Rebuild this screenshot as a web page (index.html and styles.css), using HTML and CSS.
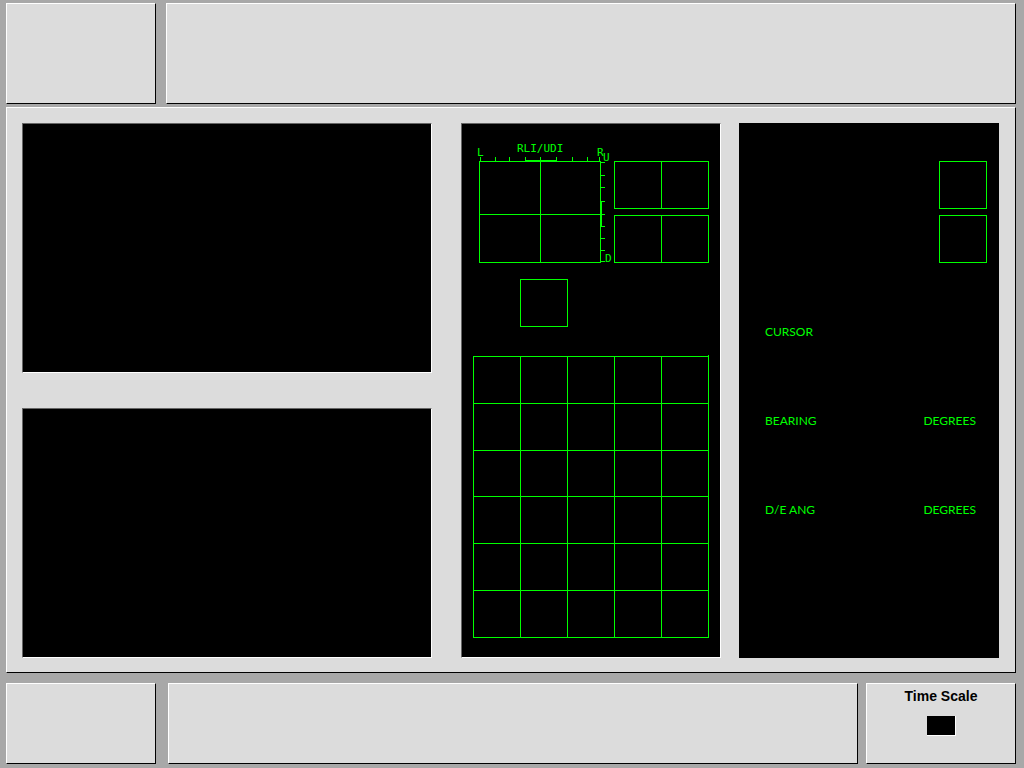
FILE: index.html
```
<!DOCTYPE html>
<html lang="en">
<head>
<meta charset="utf-8">
<title>Display Console</title>
<link rel="stylesheet" href="styles.css">
</head>
<body>
<div class="console">
  <header class="bar bar-top">
    <div class="panel panel-side"></div>
    <div class="panel panel-wide"></div>
  </header>

  <main class="panel workspace">
    <div class="displays">
      <section class="screen"></section>
      <section class="screen"></section>
    </div>

    <section class="screen indicators">
      <div class="gauges">
        <svg class="rli" width="139" height="120" viewBox="473 143 139 120" role="img" aria-label="RLI/UDI indicator">
          <g class="rli-line">
            <path d="M479 161h122v1h-122zM479 262h122v1h-122zM479 161h1v102h-1zM600 161h1v102h-1z"/>
            <path d="M540 157h1v106h-1zM479 214h126v1h-126z"/>
            <path d="M480 157h1v4h-1zM495 157h1v4h-1zM509 157h1v4h-1zM525 157h1v4h-1zM556 157h1v4h-1zM572 157h1v4h-1zM587 157h1v4h-1zM599 157h1v4h-1z"/>
            <path d="M525 160h32v1h-32zM601 201h1v26h-1z"/>
            <path d="M601 162h4v1h-4zM601 175h4v1h-4zM601 187h4v1h-4zM601 201h4v1h-4zM601 226h4v1h-4zM601 238h4v1h-4zM601 250h4v1h-4zM601 261h4v1h-4z"/>
          </g>
          <g class="rli-text">
            <text x="517" y="152">RLI/UDI</text>
            <text x="477" y="156">L</text>
            <text x="597" y="156">R</text>
            <text x="603" y="161">U</text>
            <text x="605" y="262">D</text>
          </g>
        </svg>
        <div class="pairs">
          <div class="pair"><span></span><span></span></div>
          <div class="pair"><span></span><span></span></div>
        </div>
      </div>
      <div class="cell cell-single"></div>
      <div class="matrix">
        <i></i><i></i><i></i><i></i><i></i>
        <i></i><i></i><i></i><i></i><i></i>
        <i></i><i></i><i></i><i></i><i></i>
        <i></i><i></i><i></i><i></i><i></i>
        <i></i><i></i><i></i><i></i><i></i>
        <i></i><i></i><i></i><i></i><i></i>
      </div>
    </section>

    <section class="readout">
      <div class="cells">
        <div class="cell"></div>
        <div class="cell"></div>
      </div>
      <div class="values">
        <div class="value"><span>CURSOR</span></div>
        <div class="value"><span>BEARING</span><span>DEGREES</span></div>
        <div class="value"><span>D/E ANG</span><span>DEGREES</span></div>
      </div>
    </section>
  </main>

  <footer class="bar bar-bottom">
    <div class="panel panel-side"></div>
    <div class="panel panel-wide"></div>
    <div class="panel panel-side time-scale">
      <label for="time-scale">Time Scale</label>
      <input id="time-scale" class="time-input" type="text">
    </div>
  </footer>
</div>
</body>
</html>
```
FILE: styles.css
```
* {
  box-sizing: border-box;
}

body {
  margin: 0;
  background: #a8a8a8;
  color: #000;
  font-family: "Liberation Sans", Arial, sans-serif;
}

.console {
  display: flex;
  flex-direction: column;
  min-height: 100vh;
  padding: 3px 8px 4px 6px;
}

.bar {
  display: flex;
  gap: 10px;
}

.bar-top {
  min-height: 101px;
  margin-bottom: 3px;
}

.bar-bottom {
  min-height: 81px;
  margin-top: 10px;
}

.panel {
  background: #dcdcdc;
  border: 1px solid;
  border-color: #fff #000 #000 #fff;
}

.panel-side {
  flex: 0 0 150px;
}

.panel-wide {
  flex: 1;
}

.bar-bottom .panel-wide {
  margin-left: 2px;
  margin-right: -2px;
}

.workspace {
  flex: 1;
  display: flex;
  padding: 15px 16px 14px 15px;
}

.displays {
  flex: 1;
  display: grid;
  grid-template-rows: 1fr 1fr;
  gap: 35px;
  margin-right: 29px;
}

.screen {
  background: #000;
  border: 1px solid;
  border-color: #666 #fff #fff #666;
}

.indicators {
  flex: 0 0 260px;
  display: flex;
  flex-direction: column;
  margin-right: 18px;
  padding: 19px 11px;
}

.gauges {
  display: flex;
  justify-content: space-between;
  align-items: flex-end;
}

.rli {
  display: block;
  overflow: visible;
}

.rli-line {
  fill: #0f0;
  shape-rendering: crispEdges;
}

.rli-text {
  fill: #0f0;
  font-family: "DejaVu Sans Mono", "Liberation Mono", monospace;
  font-size: 11px;
}

.pairs,
.cells {
  display: flex;
  flex-direction: column;
  gap: 6px;
}

.pair {
  display: flex;
  width: 95px;
  height: 48px;
  border: 1px solid #0f0;
}

.pair span {
  flex: 1;
}

.pair span + span {
  border-left: 1px solid #0f0;
}

.cell {
  width: 48px;
  height: 48px;
  border: 1px solid #0f0;
}

.cell-single {
  margin: 16px 0 29px 47px;
}

.matrix {
  flex: 1;
  position: relative;
  display: grid;
  grid-template-columns: repeat(5, 1fr);
  grid-template-rows: repeat(6, 1fr);
  border: solid #0f0;
  border-width: 1px 0 0 1px;
}

.matrix i {
  border: solid #0f0;
  border-width: 0 1px 1px 0;
}

.matrix::before {
  content: "";
  position: absolute;
  top: -2px;
  right: 0;
  width: 1px;
  height: 1px;
  background: #0f0;
}

.readout {
  flex: 0 0 260px;
  padding: 38px 12px;
  background: #000;
  color: #0f0;
}

.cells {
  align-items: flex-end;
}

.values {
  display: flex;
  flex-direction: column;
  gap: 69px;
  margin-top: 59px;
  padding: 0 11px 0 14px;
  font: 12px/20px Lato, "Open Sans", sans-serif;
}

.value {
  display: flex;
  justify-content: space-between;
}

.time-scale {
  display: flex;
  flex-direction: column;
  align-items: center;
  gap: 12px;
  padding-top: 4px;
  font: bold 14px/16px "Liberation Sans", Arial, sans-serif;
}

.time-input {
  width: 29px;
  height: 20px;
  padding: 0 2px;
  border: solid #fff;
  border-width: 0 1px 1px 0;
  border-radius: 0;
  background: #000;
  color: #0f0;
  font: 12px/16px "Liberation Sans", Arial, sans-serif;
}
```
